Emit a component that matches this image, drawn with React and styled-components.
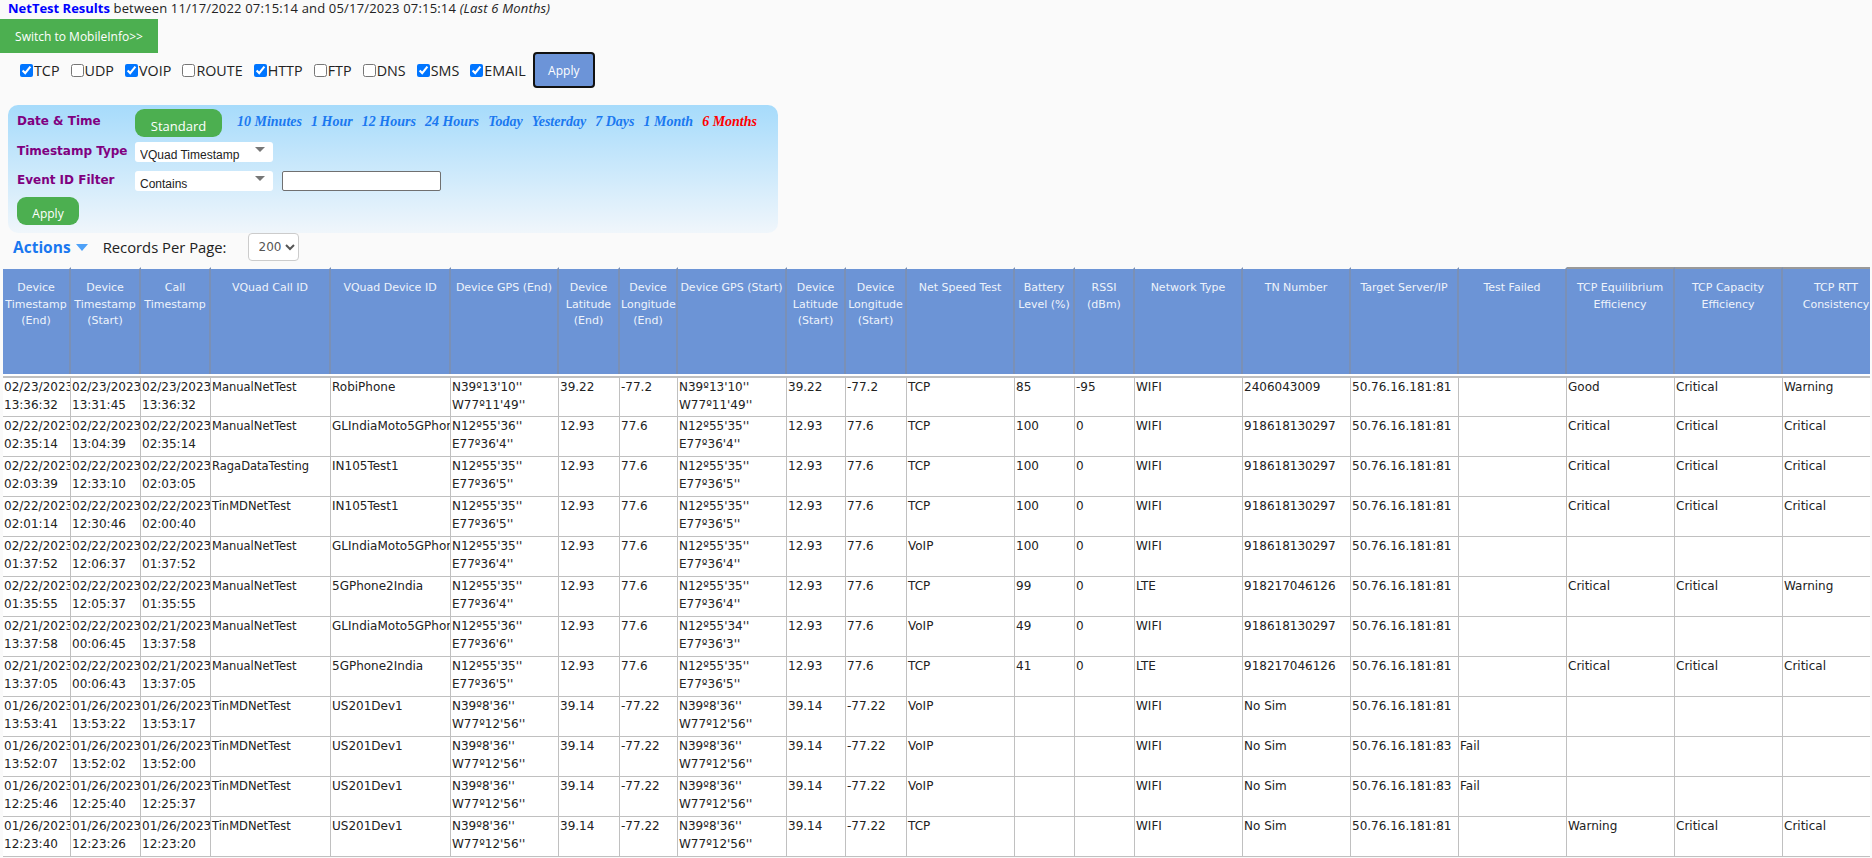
import React from "react";
import styled, { createGlobalStyle } from "styled-components";

const Global = createGlobalStyle`
  html, body { margin: 0; padding: 0; background: #fafafa; overflow: hidden; }
  body { font-family: "Open Sans", "Liberation Sans", sans-serif; color: #222; }
`;
const Page = styled.div`width: 1872px; height: 858px; overflow: hidden;`;
const Title = styled.div`
  height: 19px; line-height: 17px; padding-left: 8px; font-size: 13px; white-space: nowrap; color: #222;
  letter-spacing: .18px;
  b { color: #0000ff; letter-spacing: 0; } i { font-style: italic; }
`;
const SwitchButton = styled.button`
  display: block; width: 158px; height: 34px; border: 0; padding: 0; background: #4caf50; color: #fff;
  font-family: inherit; font-size: 12px;
`;
const CheckRow = styled.div`display: flex; align-items: center; height: 35px; padding-left: 20px;`;
const CheckItem = styled.label`
  display: inline-flex; align-items: center; margin-right: 11.1px; font-size: 14.3px; color: #222;
  input { width: 13px; height: 13px; margin: 0 1px 0 0; accent-color: #0075ff; }
`;
const BlueButton = styled.button`
  width: 62px; height: 36px; margin: -1px 0 0 -4px; box-sizing: border-box; border: 2px solid #111; border-radius: 4px;
  background: #6c94d8; color: #fff; font-family: inherit; font-size: 12px; padding: 0;
`;
const Panel = styled.div`
  width: 761px; height: 128px; margin: 17px 0 0 8px; padding-left: 9px; box-sizing: content-box; border-radius: 10px;
  background: linear-gradient(#a6dbfb, #f0f6fb); display: flex; flex-direction: column;
`;
const PanelRow = styled.div`display: flex; align-items: flex-start; margin-top: ${p => p.$top}px;`;
const Label = styled.div`
  width: 118px; margin-top: ${p => p.$top}px; flex: none; font: bold 12px/16px "DejaVu Sans", sans-serif; color: #800080; white-space: nowrap;
`;
const GreenButton = styled.button`
  width: ${p => p.$w}px; height: 28px; border: 0; border-radius: 9px; background: #4caf50; color: #fff; padding: 5px 0 0;
  font-family: "Open Sans", sans-serif; font-size: ${p => p.$size}px;
`;
const Links = styled.div`display: flex; gap: 9.1px; margin: 3px 0 0 15px;`;
const TimeLink = styled.a`
  font: italic bold 14px/20px "Liberation Serif", serif; white-space: nowrap; color: ${p => p.$on ? "#ff0000" : "#1a78f0"};
`;
const SelectBox = styled.div`
  position: relative; width: 138px; height: 20px; background: #fff; border-radius: 3px;
  &::after {
    content: ""; position: absolute; right: 8px; top: 5px; border: 5px solid transparent; border-top: 5px solid #777; border-bottom: 0;
  }
`;
const SelectText = styled.select`
  width: 100%; height: 100%; border: 0; background: transparent; appearance: none; padding: 0 0 2px 5px; outline: none;
  font: 12px "Liberation Sans", sans-serif; color: #222;
`;
const TextInput = styled.input`
  width: 159px; height: 20px; box-sizing: border-box; margin-left: 9px; border: 1px solid #707070; border-radius: 2px; background: #fff; padding: 0;
`;
const ActionBar = styled.div`display: flex; align-items: center; height: 28px; padding-left: 13px;`;
const Actions = styled.span`font-size: 15.5px; font-weight: 700; color: #1a78f0;`;
const Triangle = styled.span`
  width: 0; height: 0; margin: 1px 0 0 5px; border: 6.5px solid transparent; border-top: 7px solid #4ea1f8; border-bottom: 0;
`;
const PerPage = styled.span`margin-left: 15px; font-size: 14.8px; color: #222; white-space: nowrap;`;
const PerSelect = styled.select`
  width: 51px; height: 28px; margin-left: 21px; background: #fff; border: 1px solid #ccc; border-radius: 4px; padding-left: 6px;
  font: 12px "DejaVu Sans", sans-serif; color: #555;
`;
const TableWrap = styled.div`width: 1867px; margin: 6px 0 0 3px; overflow: hidden;`;
const Table = styled.table`
  table-layout: fixed; width: 1888px; border-collapse: separate; border-spacing: 0;
  font: 12px "DejaVu Sans", sans-serif;
`;
const Th = styled.th`
  height: 94px; padding: 11px 1px 0; vertical-align: top; box-sizing: content-box; font-weight: 400; font-size: 11px; line-height: 16.5px;
  background: #6c94d6; color: #eef3fb; border-right: 2px solid #7a90b6; border-top: 2px solid ${p => p.$edge ? "#999" : "transparent"};
  background-clip: padding-box;
`;
const Td = styled.td`
  padding: 0 1px; height: 40px; box-sizing: border-box; vertical-align: top; line-height: 18px; overflow: hidden;
  font-size: ${p => p.$tight ? "11.5px" : "12px"};
  color: #222; background: #fff; border-right: 1px solid #c0c0c0; border-bottom: 1px solid #c0c0c0;
  ${p => p.$first && "border-top: 2px solid #c0c0c0; height: 41px;"}
`;
const Spacer = styled.tr`height: 2px; td { height: 2px; padding: 0; background: #fff; }`;

const cols = [
  ["Device Timestamp (End)", 68], ["Device Timestamp (Start)", 70], ["Call Timestamp", 70], ["VQuad Call ID", 120],
  ["VQuad Device ID", 120], ["Device GPS (End)", 108], ["Device Latitude (End)", 61], ["Device Longitude (End)", 58],
  ["Device GPS (Start)", 109], ["Device Latitude (Start)", 59], ["Device Longitude (Start)", 61], ["Net Speed Test", 108],
  ["Battery Level (%)", 60], ["RSSI (dBm)", 60], ["Network Type", 108], ["TN Number", 108], ["Target Server/IP", 108],
  ["Test Failed", 108], ["TCP Equilibrium Efficiency", 108], ["TCP Capacity Efficiency", 108], ["TCP RTT Consistency", 108],
];

const ip1 = "50.76.16.181:81", ip3 = "50.76.16.181:83";
const gps = (a, b) => `${a} ${b}`;
const row = (d1, d2, d3, call, dev, g1, la1, lo1, g2, la2, lo2, sp, bat, rssi, net, tn, ip, fail, a, b, c) =>
  [d1, d2, d3, call, dev, g1, la1, lo1, g2, la2, lo2, sp, bat, rssi, net, tn, ip, fail, a, b, c];
const A = "N12º55'35''";
const rows = [
  row("02/23/2023 13:36:32","02/23/2023 13:31:45","02/23/2023 13:36:32","ManualNetTest","RobiPhone",gps("N39º13'10''","W77º11'49''"),"39.22","-77.2",gps("N39º13'10''","W77º11'49''"),"39.22","-77.2","TCP","85","-95","WIFI","2406043009",ip1,"","Good","Critical","Warning"),
  row("02/22/2023 02:35:14","02/22/2023 13:04:39","02/22/2023 02:35:14","ManualNetTest","GLIndiaMoto5GPhone",gps("N12º55'36''","E77º36'4''"),"12.93","77.6",gps(A,"E77º36'4''"),"12.93","77.6","TCP","100","0","WIFI","918618130297",ip1,"","Critical","Critical","Critical"),
  row("02/22/2023 02:03:39","02/22/2023 12:33:10","02/22/2023 02:03:05","RagaDataTesting","IN105Test1",gps(A,"E77º36'5''"),"12.93","77.6",gps(A,"E77º36'5''"),"12.93","77.6","TCP","100","0","WIFI","918618130297",ip1,"","Critical","Critical","Critical"),
  row("02/22/2023 02:01:14","02/22/2023 12:30:46","02/22/2023 02:00:40","TinMDNetTest","IN105Test1",gps(A,"E77º36'5''"),"12.93","77.6",gps(A,"E77º36'5''"),"12.93","77.6","TCP","100","0","WIFI","918618130297",ip1,"","Critical","Critical","Critical"),
  row("02/22/2023 01:37:52","02/22/2023 12:06:37","02/22/2023 01:37:52","ManualNetTest","GLIndiaMoto5GPhone",gps(A,"E77º36'4''"),"12.93","77.6",gps(A,"E77º36'4''"),"12.93","77.6","VoIP","100","0","WIFI","918618130297",ip1,"","","",""),
  row("02/22/2023 01:35:55","02/22/2023 12:05:37","02/22/2023 01:35:55","ManualNetTest","5GPhone2India",gps(A,"E77º36'4''"),"12.93","77.6",gps(A,"E77º36'4''"),"12.93","77.6","TCP","99","0","LTE","918217046126",ip1,"","Critical","Critical","Warning"),
  row("02/21/2023 13:37:58","02/22/2023 00:06:45","02/21/2023 13:37:58","ManualNetTest","GLIndiaMoto5GPhone",gps("N12º55'36''","E77º36'6''"),"12.93","77.6",gps("N12º55'34''","E77º36'3''"),"12.93","77.6","VoIP","49","0","WIFI","918618130297",ip1,"","","",""),
  row("02/21/2023 13:37:05","02/22/2023 00:06:43","02/21/2023 13:37:05","ManualNetTest","5GPhone2India",gps(A,"E77º36'5''"),"12.93","77.6",gps(A,"E77º36'5''"),"12.93","77.6","TCP","41","0","LTE","918217046126",ip1,"","Critical","Critical","Critical"),
];
const us = (t1, t2, t3, sp, ip, fail, a, b, c) => {
  const g = gps("N39º8'36''", "W77º12'56''");
  return row(`01/26/2023 ${t1}`,`01/26/2023 ${t2}`,`01/26/2023 ${t3}`,"TinMDNetTest","US201Dev1",g,"39.14","-77.22",g,"39.14","-77.22",sp,"","","WIFI","No Sim",ip,fail,a,b,c);
};
rows.push(
  us("13:53:41","13:53:22","13:53:17","VoIP",ip1,"","","",""),
  us("13:52:07","13:52:02","13:52:00","VoIP",ip3,"Fail","","",""),
  us("12:25:46","12:25:40","12:25:37","VoIP",ip3,"Fail","","",""),
  us("12:23:40","12:23:26","12:23:20","TCP",ip1,"","Warning","Critical","Critical"),
);

const checks = [["TCP",1],["UDP",0],["VOIP",1],["ROUTE",0],["HTTP",1],["FTP",0],["DNS",0],["SMS",1],["EMAIL",1]];
const links = ["10 Minutes","1 Hour","12 Hours","24 Hours","Today","Yesterday","7 Days","1 Month"];

export default function App() {
  return (
    <Page>
      <Global />
      <Title><b>NetTest Results</b> between 11/17/2022 07:15:14 and 05/17/2023 07:15:14 <i>(Last 6 Months)</i></Title>
      <SwitchButton>Switch to MobileInfo&gt;&gt;</SwitchButton>
      <CheckRow>
        {checks.map(([n, c]) => (
          <CheckItem key={n}><input type="checkbox" defaultChecked={!!c} />{n}</CheckItem>
        ))}
        <BlueButton>Apply</BlueButton>
      </CheckRow>
      <Panel>
        <PanelRow $top={4}>
          <Label $top={4}>Date &amp; Time</Label>
          <GreenButton $w={87} $size={13}>Standard</GreenButton>
          <Links>
            {links.map(l => <TimeLink key={l}>{l}</TimeLink>)}
            <TimeLink $on>6 Months</TimeLink>
          </Links>
        </PanelRow>
        <PanelRow $top={5}>
          <Label $top={1}>Timestamp Type</Label>
          <SelectBox><SelectText defaultValue="VQuad Timestamp"><option>VQuad Timestamp</option></SelectText></SelectBox>
        </PanelRow>
        <PanelRow $top={9}>
          <Label $top={1}>Event ID Filter</Label>
          <SelectBox><SelectText defaultValue="Contains"><option>Contains</option></SelectText></SelectBox>
          <TextInput />
        </PanelRow>
        <PanelRow $top={6}>
          <GreenButton $w={62} $size={12}>Apply</GreenButton>
        </PanelRow>
      </Panel>
      <ActionBar>
        <Actions>Actions</Actions>
        <Triangle />
        <PerPage>Records Per Page:</PerPage>
        <PerSelect defaultValue="200"><option>200</option></PerSelect>
      </ActionBar>
      <TableWrap>
        <Table>
          <colgroup>{cols.map(([n, w]) => <col key={n} style={{ width: w }} />)}</colgroup>
          <thead>
            <tr>{cols.map(([n], i) => <Th key={n} $edge={i >= 18}>{n}</Th>)}</tr>
            <Spacer><td colSpan={cols.length} /></Spacer>
          </thead>
          <tbody>
            {rows.map((r, i) => (
              <tr key={i}>{r.map((v, j) => <Td key={j} $first={i === 0} $tight={j === 3}>{v}</Td>)}</tr>
            ))}
          </tbody>
        </Table>
      </TableWrap>
    </Page>
  );
}
